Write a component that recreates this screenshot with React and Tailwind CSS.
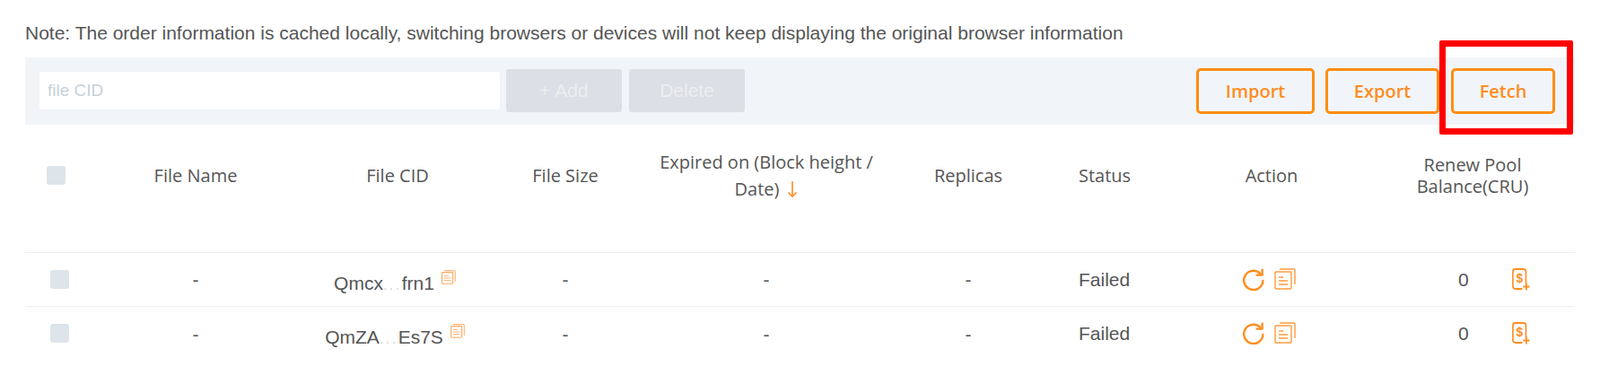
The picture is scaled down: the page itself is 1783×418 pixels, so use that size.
const rows = [
  { head: 'Qmcx', tail: 'frn1' },
  { head: 'QmZA', tail: 'Es7S' },
];

function Check() {
  return <span className="block w-[21px] h-[21px] rounded-[3px] bg-[#dde4ea]" />;
}

function SortArrow() {
  return (
    <svg width="12" height="20" viewBox="0 0 12 20" className="inline-block ml-[9px] align-[-3px]" fill="none" stroke="#ff8d1f" strokeWidth="1.6">
      <path d="M6 1v17" />
      <path d="M1.5 13.5L6 18l4.5-4.5" />
    </svg>
  );
}

function CopyIcon() {
  return (
    <svg width="16" height="16" viewBox="0 0 16 16" fill="none" stroke="#ffb574" strokeWidth="1.1">
      <rect x="0.6" y="2.6" width="12" height="12.6" rx="0.8" stroke="#ffa95c" />
      <path d="M3 0.6h11.4a1 1 0 0 1 .9 1V13" />
      <path d="M3 6.5h5M3 9h7.5M3 11.5h7.5" />
    </svg>
  );
}

function RefreshIcon() {
  return (
    <svg width="24" height="25" viewBox="0 0 24 25" fill="none" stroke="#ff8d1f" strokeWidth="2.4" strokeLinecap="round">
      <path d="M19.6 6.2A10.6 10.6 0 1 0 22.4 14" />
      <path d="M21.6 1.6v6h-6" strokeLinejoin="round" />
    </svg>
  );
}

function DocIcon() {
  return (
    <svg width="24" height="24" viewBox="0 0 24 24" fill="none" stroke="#ff9a3c" strokeWidth="1.4">
      <rect x="1" y="4" width="18" height="19" rx="1" />
      <path d="M6 1h16a1 1 0 0 1 1 1v16" />
      <path d="M5 10h5M5 14h10M5 18h10" />
    </svg>
  );
}

function MoneyIcon() {
  return (
    <svg width="20" height="25" viewBox="0 0 22 25" preserveAspectRatio="none" fill="none" stroke="#ff8d1f" strokeWidth="1.8">
      <path d="M12 23H4a3 3 0 0 1-3-3V4a3 3 0 0 1 3-3h10a3 3 0 0 1 3 3v13" strokeLinecap="round" />
      <text x="9" y="16" textAnchor="middle" fontSize="15" fontWeight="700" fill="#ff8d1f" stroke="none" fontFamily="'Liberation Sans', sans-serif">$</text>
      <path d="M13.5 20.5h8M17.5 16.5v8" strokeWidth="1.9" />
    </svg>
  );
}

const thClass = "font-normal text-center align-middle px-4 pb-[28px]";
const tdClass = "h-[60px] p-0 border-t border-[#eeeeee] text-center align-middle";
const dashClass = "h-[60px] p-0 pt-[2px] border-t border-[#eeeeee] text-center align-middle";

export default function App() {
  return (
    <div className="min-h-screen bg-white pl-[28px] pr-[28px] font-['Liberation_Sans',Arial,sans-serif] text-[#555555]">
      <p className="pt-[24px] mb-[14px] text-[21px] leading-[26px] whitespace-nowrap">
        Note: The order information is cached locally, switching browsers or devices will not keep displaying the original browser information
      </p>

      {/* Toolbar */}
      <div className="w-[1727px] h-[75px] flex items-center pl-4 pr-[22px] bg-[#f1f5f9]">
        <input
          type="text"
          placeholder="file CID"
          className="w-[513px] h-[42px] mb-[1px] px-[9px] rounded-[3px] bg-white text-[19px] outline-none placeholder:text-[#c8d1d9]"
        />
        <button className="ml-[7px] w-[129px] h-[48px] mb-[1px] rounded-[3px] bg-[#dcdfe5] text-[21px] text-[#eceef1]">+ Add</button>
        <button className="ml-[8px] w-[129px] h-[48px] mb-[1px] rounded-[3px] bg-[#dcdfe5] text-[21px] text-[#eceef1]">Delete</button>
        <div className="ml-auto flex items-center font-['Open_Sans',sans-serif] font-semibold text-[20px] text-[#ff8d1f]">
          <button className="w-[132px] h-[51px] rounded-[5px] border-[3px] border-[#ff8d12]">Import</button>
          <button className="ml-[12px] w-[127px] h-[51px] rounded-[5px] border-[3px] border-[#ff8d12]">Export</button>
          <div className="relative ml-[13px]">
            <button className="block w-[116px] h-[51px] rounded-[5px] border-[3px] border-[#ff8d12]">Fetch</button>
            <span className="absolute -left-[13px] -right-[20px] -top-[31px] -bottom-[23px] rounded-[2px] border-[7px] border-[#ff0000] pointer-events-none" />
          </div>
        </div>
      </div>

      {/* Table */}
      <table className="table-fixed w-[1727px]">
        <colgroup>
          <col className="w-[80px]" />
          <col className="w-[220px]" />
          <col className="w-[230px]" />
          <col className="w-[144px]" />
          <col className="w-[304px]" />
          <col className="w-[146px]" />
          <col className="w-[155px]" />
          <col className="w-[220px]" />
          <col className="w-[228px]" />
        </colgroup>
        <thead className="font-['Open_Sans',sans-serif] text-[20px] leading-[24px] text-[#555555]">
          <tr className="h-[142px]">
            <th className="font-normal align-middle pl-[24px] pb-[28px]"><Check /></th>
            <th className={thClass}>File Name</th>
            <th className={thClass}>File CID</th>
            <th className={thClass}>File Size</th>
            <th className={thClass}>
              <span className="block leading-[30px]">Expired on (Block height / Date)<SortArrow /></span>
            </th>
            <th className={thClass}>Replicas</th>
            <th className="font-normal text-left align-middle pl-[50px] pb-[28px]">Status</th>
            <th className={thClass}>Action</th>
            <th className={thClass}>Renew Pool Balance(CRU)</th>
          </tr>
        </thead>
        <tbody className="text-[21px]">
          {rows.map((row) => (
            <tr key={row.head}>
              <td className="h-[60px] p-0 pl-[28px] border-t border-[#eeeeee] align-middle"><Check /></td>
              <td className={dashClass}>-</td>
              <td className={tdClass}>
                <div className="flex justify-center pr-[6px]">
                  <span className="pt-[11px] leading-[24px]">
                    {row.head}
                    <span className="tracking-[2.5px] text-[#d5d5d5] text-[16px]">...</span>
                    {row.tail}
                  </span>
                  <span className="ml-[8px] mt-[8px]"><CopyIcon /></span>
                </div>
              </td>
              <td className={dashClass}>-</td>
              <td className={dashClass}>-</td>
              <td className={dashClass}>-</td>
              <td className="h-[60px] p-0 pt-[1px] pl-[50px] border-t border-[#eeeeee] align-middle">Failed</td>
              <td className={tdClass}>
                <div className="flex items-center justify-center gap-[11px] pr-[5px]">
                  <RefreshIcon />
                  <DocIcon />
                </div>
              </td>
              <td className="h-[60px] p-0 pt-[1px] pl-[98px] border-t border-[#eeeeee] align-middle">
                <div className="flex items-center gap-[48px]">
                  <span>0</span>
                  <MoneyIcon />
                </div>
              </td>
            </tr>
          ))}
        </tbody>
      </table>
    </div>
  );
}
